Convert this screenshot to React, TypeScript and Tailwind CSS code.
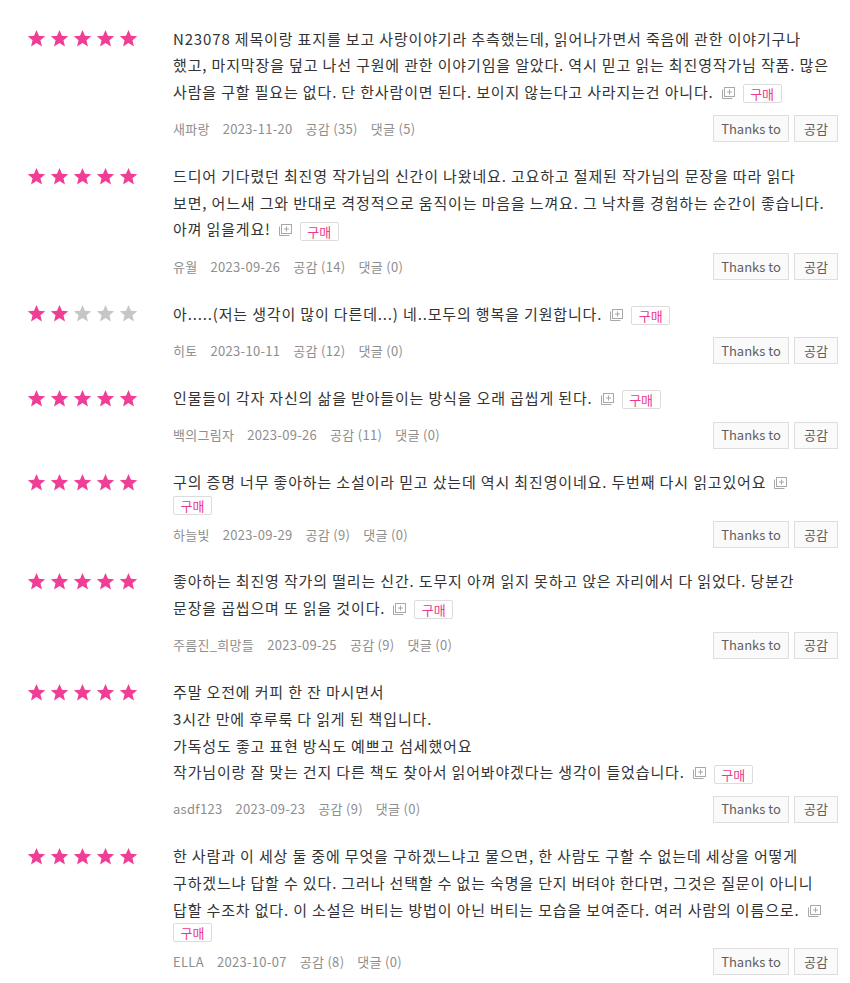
import React from "react";

// ─── Data ────────────────────────────────────────────────────────────────────

type Review = {
  rating: number;
  lines: string[];
  badgeWraps?: boolean;
  author: string;
  date: string;
  likes: number;
  comments: number;
};

const reviews: Review[] = [
  {
    rating: 5,
    lines: [
      "N23078 제목이랑 표지를 보고 사랑이야기라 추측했는데, 읽어나가면서 죽음에 관한 이야기구나",
      "했고, 마지막장을 덮고 나선 구원에 관한 이야기임을 알았다. 역시 믿고 읽는 최진영작가님 작품. 많은",
      "사람을 구할 필요는 없다. 단 한사람이면 된다. 보이지 않는다고 사라지는건 아니다.",
    ],
    author: "새파랑",
    date: "2023-11-20",
    likes: 35,
    comments: 5,
  },
  {
    rating: 5,
    lines: [
      "드디어 기다렸던 최진영 작가님의 신간이 나왔네요. 고요하고 절제된 작가님의 문장을 따라 읽다",
      "보면, 어느새 그와 반대로 격정적으로 움직이는 마음을 느껴요. 그 낙차를 경험하는 순간이 좋습니다.",
      "아껴 읽을게요!",
    ],
    author: "유월",
    date: "2023-09-26",
    likes: 14,
    comments: 0,
  },
  {
    rating: 2,
    lines: ["아.....(저는 생각이 많이 다른데...) 네..모두의 행복을 기원합니다."],
    author: "히토",
    date: "2023-10-11",
    likes: 12,
    comments: 0,
  },
  {
    rating: 5,
    lines: ["인물들이 각자 자신의 삶을 받아들이는 방식을 오래 곱씹게 된다."],
    author: "백의그림자",
    date: "2023-09-26",
    likes: 11,
    comments: 0,
  },
  {
    rating: 5,
    lines: ["구의 증명 너무 좋아하는 소설이라 믿고 샀는데 역시 최진영이네요. 두번째 다시 읽고있어요"],
    badgeWraps: true,
    author: "하늘빛",
    date: "2023-09-29",
    likes: 9,
    comments: 0,
  },
  {
    rating: 5,
    lines: [
      "좋아하는 최진영 작가의 떨리는 신간. 도무지 아껴 읽지 못하고 앉은 자리에서 다 읽었다. 당분간",
      "문장을 곱씹으며 또 읽을 것이다.",
    ],
    author: "주름진_희망들",
    date: "2023-09-25",
    likes: 9,
    comments: 0,
  },
  {
    rating: 5,
    lines: [
      "주말 오전에 커피 한 잔 마시면서",
      "3시간 만에 후루룩 다 읽게 된 책입니다.",
      "가독성도 좋고 표현 방식도 예쁘고 섬세했어요",
      "작가님이랑 잘 맞는 건지 다른 책도 찾아서 읽어봐야겠다는 생각이 들었습니다.",
    ],
    author: "asdf123",
    date: "2023-09-23",
    likes: 9,
    comments: 0,
  },
  {
    rating: 5,
    lines: [
      "한 사람과 이 세상 둘 중에 무엇을 구하겠느냐고 물으면, 한 사람도 구할 수 없는데 세상을 어떻게",
      "구하겠느냐 답할 수 있다. 그러나 선택할 수 없는 숙명을 단지 버텨야 한다면, 그것은 질문이 아니니",
      "답할 수조차 없다. 이 소설은 버티는 방법이 아닌 버티는 모습을 보여준다. 여러 사람의 이름으로.",
    ],
    badgeWraps: true,
    author: "ELLA",
    date: "2023-10-07",
    likes: 8,
    comments: 0,
  },
];

// ─── Bits ────────────────────────────────────────────────────────────────────

function Star({ on }: { on: boolean }) {
  return (
    <svg viewBox="0 0 24 24" className="h-[19px] w-[19px]" aria-hidden>
      <path
        d="M12 1.2l3.1 7.3 7.9.6-6 5.2 1.9 7.7L12 17.8 5.1 22l1.9-7.7-6-5.2 7.9-.6z"
        fill={on ? "#f03e97" : "#c6c6c6"}
      />
    </svg>
  );
}

function Stars({ rating }: { rating: number }) {
  return (
    <div className="flex h-[26.6px] items-center gap-[4px]">
      {[0, 1, 2, 3, 4].map((i) => (
        <Star key={i} on={i < rating} />
      ))}
    </div>
  );
}

function MoreIcon() {
  return (
    <svg
      viewBox="0 0 14 12"
      className="ml-[7px] inline-block h-[12px] w-[14px] align-[-1px]"
      fill="none"
      stroke="#a8a8a8"
      strokeWidth="1"
      aria-hidden
    >
      <rect x="3.5" y="0.5" width="10" height="9" />
      <path d="M8.5 2.5v5M6 5h5" />
      <path d="M1.5 2.5v9h10" />
    </svg>
  );
}

function Badge({ block }: { block?: boolean }) {
  return (
    <span
      className={
        block
          ? "flex h-[19px] w-[39px] items-center justify-center rounded-[2px] border border-[#dcdcdc] bg-white text-[13px] leading-none tracking-normal text-[#ec3a8e]"
          : "ml-[8px] inline-flex h-[19px] w-[39px] items-center justify-center rounded-[2px] border border-[#dcdcdc] bg-white align-middle text-[13px] leading-none tracking-normal text-[#ec3a8e]"
      }
    >
      구매
    </span>
  );
}

function ActionButton({ children, w }: { children: React.ReactNode; w: string }) {
  return (
    <button
      type="button"
      className={`${w} flex h-[27px] items-center justify-center border border-[#dedede] bg-[#fafafa] text-[13px] text-[#5f5f5f]`}
    >
      {children}
    </button>
  );
}

// ─── Review Row ──────────────────────────────────────────────────────────────

function ReviewRow({ review }: { review: Review }) {
  const last = review.lines.length - 1;
  return (
    <div className="flex pt-[20.7px]">
      <div className="w-[173px] shrink-0 pl-[27px]">
        <Stars rating={review.rating} />
      </div>
      <div className="min-w-0 flex-1 pr-[12px]">
        <div className="text-[15px] leading-[26.6px] tracking-[0.85px] text-[#333]">
          {review.lines.map((line, i) => (
            <div key={i} className="whitespace-nowrap">
              {line}
              {i === last && (
                <>
                  <MoreIcon />
                  {!review.badgeWraps && <Badge />}
                </>
              )}
            </div>
          ))}
          {review.badgeWraps && <Badge block />}
        </div>
        <div
          className={`flex items-center justify-between ${review.badgeWraps ? "mt-[6px]" : "mt-[10px]"}`}
        >
          <div className="flex items-center gap-[13px] text-[13px] tracking-[0.3px] text-[#8e8e8e]">
            <span>{review.author}</span>
            <span>{review.date}</span>
            <span>공감 ({review.likes})</span>
            <span>댓글 ({review.comments})</span>
          </div>
          <div className="flex gap-[5px]">
            <ActionButton w="w-[76px]">Thanks to</ActionButton>
            <ActionButton w="w-[44px]">공감</ActionButton>
          </div>
        </div>
      </div>
    </div>
  );
}

export default function App() {
  return (
    <div
      className="min-h-[983px] w-[850px] bg-white pt-[5px]"
      style={{ fontFamily: '"Noto Sans CJK KR", "Noto Sans", sans-serif' }}
    >
      {reviews.map((r, i) => (
        <ReviewRow key={i} review={r} />
      ))}
    </div>
  );
}
